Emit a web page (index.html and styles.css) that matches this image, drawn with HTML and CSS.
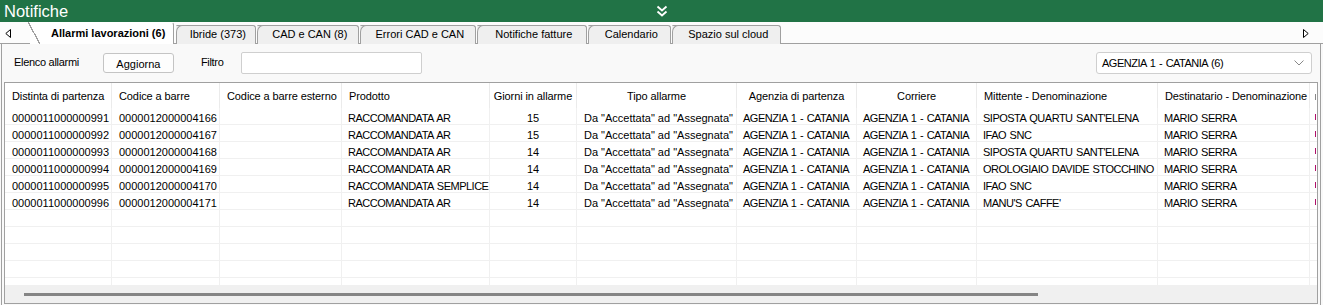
FILE: index.html
```html
<!DOCTYPE html>
<html lang="it">
<head>
<meta charset="utf-8">
<title>Notifiche</title>
<link rel="stylesheet" href="styles.css">
</head>
<body>
<div class="app">
  <header class="titlebar">
    <div class="title">Notifiche</div>
    <svg class="chev" width="12" height="12" viewBox="0 0 12 12"><polyline points="1.5,1.5 6,5.5 10.5,1.5" fill="none" stroke="#fff" stroke-width="1.8"/><polyline points="1.5,6.5 6,10.5 10.5,6.5" fill="none" stroke="#fff" stroke-width="1.8"/></svg>
    <div></div>
  </header>

  <nav class="tabstrip">
    <svg class="arrow" width="6" height="9" viewBox="0 0 6 9"><polygon points="5.5,0.5 5.5,8.5 0.8,4.5" fill="#fff" stroke="#000" stroke-width="1"/></svg>
    <div class="tabs">
      <div class="tab active">Allarmi lavorazioni (6)</div>
      <div class="tab t-ibride">Ibride (373)</div>
      <div class="tab t-cad">CAD e CAN (8)</div>
      <div class="tab t-errori">Errori CAD e CAN</div>
      <div class="tab t-fatture">Notifiche fatture</div>
      <div class="tab t-cal">Calendario</div>
      <div class="tab t-cloud">Spazio sul cloud</div>
    </div>
    <svg class="arrow right" width="6" height="9" viewBox="0 0 6 9"><polygon points="0.5,0.5 0.5,8.5 5.2,4.5" fill="#fff" stroke="#000" stroke-width="1"/></svg>
  </nav>

  <main class="panel">
    <div class="toolbar">
      <span class="label">Elenco allarmi</span>
      <button class="btn">Aggiorna</button>
      <span class="label filtro">Filtro</span>
      <div class="input"></div>
      <div class="spacer"></div>
      <div class="select">
        <span class="u">AGENZIA 1 - CATANIA (6)</span>
        <svg width="10" height="6" viewBox="0 0 10 6"><polyline points="0.5,0.5 5,5 9.5,0.5" fill="none" stroke="#888" stroke-width="1"/></svg>
      </div>
    </div>

    <div class="grid">
      <div class="row head">
        <div class="c">Distinta di partenza</div>
        <div class="c">Codice a barre</div>
        <div class="c">Codice a barre esterno</div>
        <div class="c">Prodotto</div>
        <div class="c ctr">Giorni in allarme</div>
        <div class="c ctr">Tipo allarme</div>
        <div class="c ctr">Agenzia di partenza</div>
        <div class="c ctr">Corriere</div>
        <div class="c">Mittente - Denominazione</div>
        <div class="c">Destinatario - Denominazione</div>
        <div class="c last"><span class="mark grey"></span></div>
      </div>
      <div class="body">
        <div class="row">
          <div class="c">0000011000000991</div><div class="c">0000012000004166</div><div class="c"></div><div class="c u">RACCOMANDATA AR</div><div class="c ctr">15</div><div class="c">Da "Accettata" ad "Assegnata"</div><div class="c u">AGENZIA 1 - CATANIA</div><div class="c u">AGENZIA 1 - CATANIA</div><div class="c u">SIPOSTA QUARTU SANT'ELENA</div><div class="c u">MARIO SERRA</div><div class="c last"><span class="mark"></span></div>
        </div>
        <div class="row">
          <div class="c">0000011000000992</div><div class="c">0000012000004167</div><div class="c"></div><div class="c u">RACCOMANDATA AR</div><div class="c ctr">15</div><div class="c">Da "Accettata" ad "Assegnata"</div><div class="c u">AGENZIA 1 - CATANIA</div><div class="c u">AGENZIA 1 - CATANIA</div><div class="c u">IFAO SNC</div><div class="c u">MARIO SERRA</div><div class="c last"><span class="mark"></span></div>
        </div>
        <div class="row">
          <div class="c">0000011000000993</div><div class="c">0000012000004168</div><div class="c"></div><div class="c u">RACCOMANDATA AR</div><div class="c ctr">14</div><div class="c">Da "Accettata" ad "Assegnata"</div><div class="c u">AGENZIA 1 - CATANIA</div><div class="c u">AGENZIA 1 - CATANIA</div><div class="c u">SIPOSTA QUARTU SANT'ELENA</div><div class="c u">MARIO SERRA</div><div class="c last"><span class="mark"></span></div>
        </div>
        <div class="row">
          <div class="c">0000011000000994</div><div class="c">0000012000004169</div><div class="c"></div><div class="c u">RACCOMANDATA AR</div><div class="c ctr">14</div><div class="c">Da "Accettata" ad "Assegnata"</div><div class="c u">AGENZIA 1 - CATANIA</div><div class="c u">AGENZIA 1 - CATANIA</div><div class="c u">OROLOGIAIO DAVIDE STOCCHINO</div><div class="c u">MARIO SERRA</div><div class="c last"><span class="mark"></span></div>
        </div>
        <div class="row">
          <div class="c">0000011000000995</div><div class="c">0000012000004170</div><div class="c"></div><div class="c u">RACCOMANDATA SEMPLICE</div><div class="c ctr">14</div><div class="c">Da "Accettata" ad "Assegnata"</div><div class="c u">AGENZIA 1 - CATANIA</div><div class="c u">AGENZIA 1 - CATANIA</div><div class="c u">IFAO SNC</div><div class="c u">MARIO SERRA</div><div class="c last"><span class="mark"></span></div>
        </div>
        <div class="row">
          <div class="c">0000011000000996</div><div class="c">0000012000004171</div><div class="c"></div><div class="c u">RACCOMANDATA AR</div><div class="c ctr">14</div><div class="c">Da "Accettata" ad "Assegnata"</div><div class="c u">AGENZIA 1 - CATANIA</div><div class="c u">AGENZIA 1 - CATANIA</div><div class="c u">MANU'S CAFFE'</div><div class="c u">MARIO SERRA</div><div class="c last"><span class="mark"></span></div>
        </div>
        <div class="row empty"><div class="c"></div><div class="c"></div><div class="c"></div><div class="c"></div><div class="c"></div><div class="c"></div><div class="c"></div><div class="c"></div><div class="c"></div><div class="c"></div><div class="c last"></div></div>
        <div class="row empty"><div class="c"></div><div class="c"></div><div class="c"></div><div class="c"></div><div class="c"></div><div class="c"></div><div class="c"></div><div class="c"></div><div class="c"></div><div class="c"></div><div class="c last"></div></div>
        <div class="row empty"><div class="c"></div><div class="c"></div><div class="c"></div><div class="c"></div><div class="c"></div><div class="c"></div><div class="c"></div><div class="c"></div><div class="c"></div><div class="c"></div><div class="c last"></div></div>
        <div class="row empty"><div class="c"></div><div class="c"></div><div class="c"></div><div class="c"></div><div class="c"></div><div class="c"></div><div class="c"></div><div class="c"></div><div class="c"></div><div class="c"></div><div class="c last"></div></div>
        <div class="row empty"><div class="c"></div><div class="c"></div><div class="c"></div><div class="c"></div><div class="c"></div><div class="c"></div><div class="c"></div><div class="c"></div><div class="c"></div><div class="c"></div><div class="c last"></div></div>
      </div>
      <div class="hscroll"><div class="thumb"></div></div>
    </div>
  </main>
</div>
</body>
</html>
```
FILE: styles.css
```css
* { box-sizing: border-box; }
html, body { margin: 0; padding: 0; }
body {
  width: 1323px;
  height: 305px;
  overflow: hidden;
  background: #f9f9f9;
  font-family: "Liberation Sans", Arial, sans-serif;
  font-size: 11px;
  color: #000;
}
.app { display: flex; flex-direction: column; height: 305px; }
.u { letter-spacing: -0.5px; word-spacing: 1px; }

.titlebar {
  height: 22px;
  background: #217346;
  display: grid;
  grid-template-columns: 1fr auto 1fr;
  align-items: center;
  flex: none;
}
.title {
  color: #fff;
  font-size: 16.5px;
  padding-left: 4px;
  line-height: 22px;
}
.chev { display: block; }

.tabstrip {
  height: 22px;
  flex: none;
  display: flex;
  align-items: flex-end;
  background: #fcfcfc;
  border-bottom: 1px solid #a0a0a0;
}
.arrow { align-self: center; margin-left: 5px; margin-top: 1px; }
.arrow.right { margin-left: 0; margin-right: 14px; }
.tabs {
  display: flex;
  align-items: flex-end;
  gap: 1px;
  margin-left: 19px;
  flex: 1;
  margin-bottom: -1px;
}
.tab {
  position: relative;
  height: 19px;
  line-height: 17px;
  padding: 0 0 0 3px;
  text-align: center;
  background: #efefef;
  border: 1px solid #a0a0a0;
  border-bottom: none;
  border-left-color: transparent;
  border-radius: 0 3px 0 0;
  color: #000;
  white-space: nowrap;
}
.t-ibride { width: 80px; }
.t-cad { width: 102px; }
.t-errori { width: 116px; }
.t-fatture { width: 110px; }
.t-cal { width: 83px; }
.t-cloud { width: 109px; }
.tab::before {
  content: "";
  position: absolute;
  left: -1px;
  top: -1px;
  bottom: 0;
  width: 6px;
  border-left: 1px solid #a0a0a0;
  border-top: 1px solid #a0a0a0;
  border-top-left-radius: 6px 7px;
  background: #efefef;
}
.tab.active {
  height: 22px;
  line-height: 20px;
  font-weight: bold;
  background: #fff;
  padding: 0 8px 0 20px;
  border-top-color: transparent;
  border-left-color: transparent;
  z-index: 2;
  margin-right: 1px;
}
.tab.active::before {
  width: 12px;
  left: -3px;
  border: none;
  border-radius: 0;
  background: linear-gradient(to top right, transparent calc(50% - 0.6px), #a0a0a0 calc(50% - 0.6px), #a0a0a0 calc(50% + 0.6px), #fff calc(50% + 0.6px));
}

.panel {
  flex: 1;
  margin: 0 2px 0 1px;
  border-left: 1px solid #a0a0a0;
  border-right: 1px solid #a0a0a0;
  background: #f9f9f9;
  display: flex;
  flex-direction: column;
  padding: 0 2px;
  min-height: 0;
}
.toolbar {
  height: 38px;
  flex: none;
  display: flex;
  align-items: center;
  padding-left: 10px;
  padding-right: 6px;
}
.label { line-height: 14px; margin-top: -2px; letter-spacing: -0.3px; }
.btn {
  margin-left: 24px;
  width: 71px;
  height: 20px;
  font: inherit;
  color: #000;
  background: #fdfdfd;
  border: 1px solid #c4c4c4;
  border-radius: 3px;
  padding: 2px 0 0 0;
}
.filtro { margin-left: 27px; }
.input {
  margin-left: 17px;
  width: 181px;
  height: 22px;
  background: #fff;
  border: 1px solid #cfcfcf;
  border-radius: 2px;
}
.spacer { flex: 1; }
.select {
  width: 216px;
  height: 22px;
  background: #fff;
  border: 1px solid #cfcfcf;
  border-radius: 3px;
  display: flex;
  align-items: center;
  justify-content: space-between;
  padding: 0 7px 0 5px;
}

.grid {
  flex: 1;
  min-height: 0;
  border: 1px solid #a0a0a0;
  background: #fff;
  display: flex;
  flex-direction: column;
  margin-bottom: 1px;
}
.row {
  display: grid;
  grid-template-columns: 107px 108px 122px 148px 87px 160px 120px 120px 181px 152px 1fr;
  height: 17px;
  flex: none;
}
.row .c {
  border-right: 1px solid #f0f0f0;
  border-bottom: 1px solid #f0f0f0;
  padding: 2px 0 0 7px;
  line-height: 16px;
  white-space: nowrap;
  overflow: hidden;
}
.row .c.u { padding-left: 6px; }
.row .c.ctr { text-align: center; padding-left: 0; }
.row .c.last { border-right: none; padding: 0 0 0 5px; display: flex; align-items: center; }
.mark { display: block; width: 1px; height: 6px; background: #b0106a; margin-top: 2px; }
.mark.grey { background: #888; }
.row.head { height: 25px; }
.row.head .c {
  border-bottom: none;
  border-right-color: #ebebeb;
  padding-top: 0;
  line-height: 26px;
  letter-spacing: -0.1px;
}
.body {
  flex: 1;
  min-height: 0;
  overflow: hidden;
}
.hscroll {
  height: 18px;
  flex: none;
  background: #f0f0f0;
  display: flex;
  align-items: center;
  padding-left: 19px;
}
.thumb {
  width: 1014px;
  height: 3px;
  background: #858585;
  margin-top: 1px;
}
```
